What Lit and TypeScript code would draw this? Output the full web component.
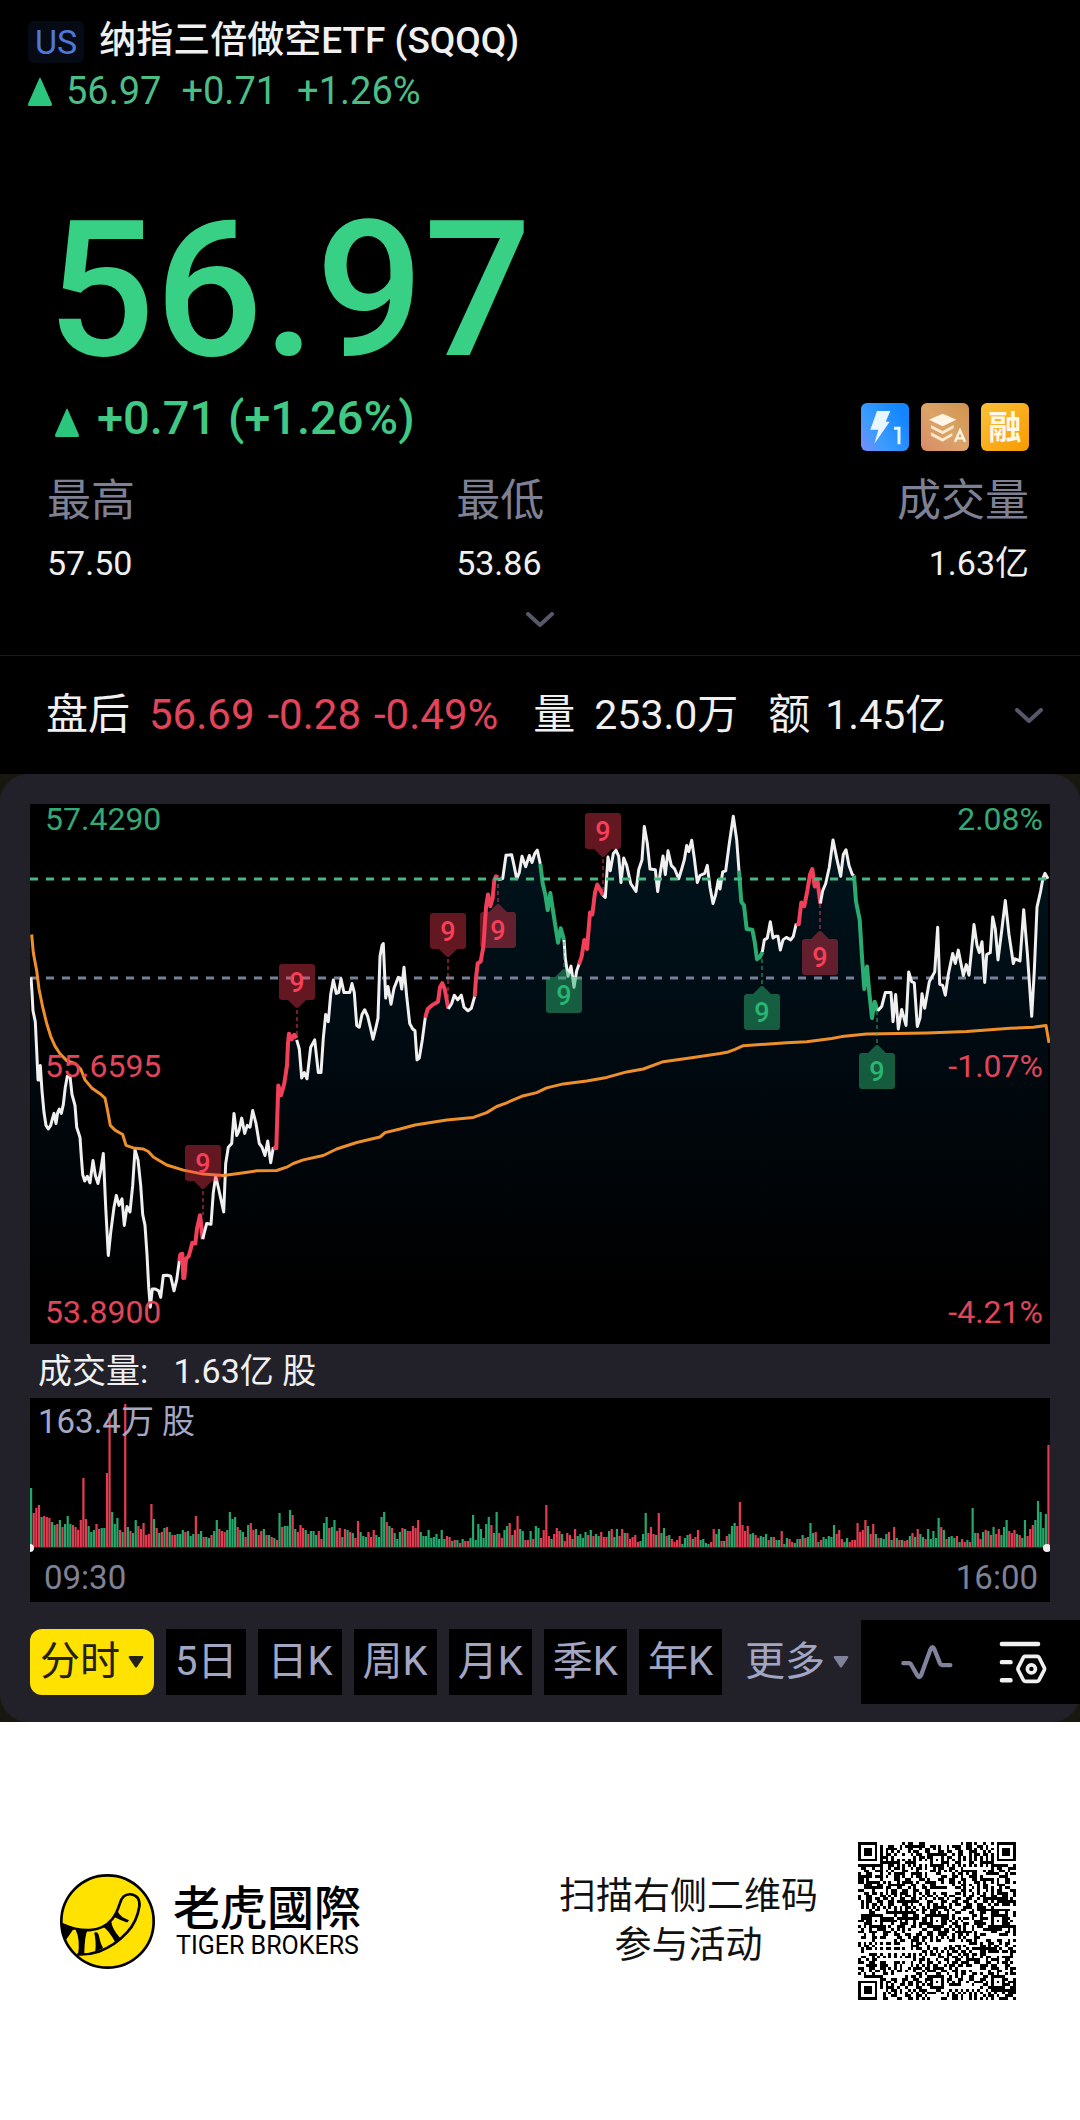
import { LitElement, html, svg, css } from "lit";
import { customElement, property, state } from "lit/decorators.js";
import { classMap } from "lit/directives/class-map.js";

type Tone = "flat" | "up" | "down";
interface Run {
  tone: Tone;
  at: number;
  pts: string;
}
interface Flag {
  x: number;
  top: number;
  tone: "up" | "down";
  tip: "above" | "below";
  leg: number;
}

/* Intraday price runs. Points are on a fine grid: 3 units per chart unit across, 11/4 down. */
const RUNS: Run[] = [
  { tone: "flat", at: -30, pts: "33,518 36,560 39,610 46,640 50,720 54,800 58,800 61,760 66,830 72,890 78,925 85,935 92,925 97,908 102,892 108,920 113,890 118,880 124,892 130,868 136,820 142,790 150,790 156,840 165,870 170,930 180,958 184,1010 188,1060 194,1078 202,1065 210,1083 219,1022 226,1062 234,1085 242,1050 250,1002 257,1150 265,1283 272,1220 282,1150 289,1118 297,1145 306,1127 313,1200 321,1148 330,1163 338,1090 345,992 354,1020 362,1090 368,1170 375,1200 381,1280 386,1370 391,1425 397,1375 406,1375 416,1380 422,1398 430,1338 442,1337 452,1340 462,1380 470,1350 478,1298" },
  { tone: "up", at: -30, pts: "478,1298 481,1280 487,1278 490,1345 493,1345 498,1292 506,1285 512,1265 517,1248 526,1250 531,1210 540,1172 544,1200 548,1238" },
  { tone: "flat", at: -30, pts: "548,1238 553,1220 560,1195 573,1197 580,1110 587,1065 596,1100 611,1163 617,1030 625,985 635,975 642,892 650,953 657,940 665,905 674,947 682,925 690,930 698,884 708,920 718,975 726,985 735,1008 743,968 752,1028 760,985" },
  { tone: "up", at: -30, pts: "760,985 769,988 772,900 775,815 783,842 793,810 801,760 804,700 807,673 815,688 823,676 830,685" },
  { tone: "flat", at: -30, pts: "830,690 838,715 845,795 853,780 861,797 872,710 884,690 890,740 895,780 903,780 910,685 917,620 925,640 932,565 940,525 949,562 956,560 963,522 972,560 989,560 996,535 1003,560 1010,650 1018,655 1026,620 1034,607 1043,625 1052,660 1059,688 1068,655 1074,630 1080,460 1086,430 1090,425 1097,575 1104,543 1113,592 1122,548 1135,518 1140,520 1145,550 1152,490 1160,570 1169,645 1178,660 1185,665 1191,745 1198,740 1207,690 1216,628" },
  { tone: "up", at: 990, pts: "196,628 203,605 215,595 234,585 240,545 247,534 254,550 265,603" },
  { tone: "flat", at: 990, pts: "265,605 275,590 283,567 293,580 304,567 312,600 324,610 334,603 344,570" },
  { tone: "up", at: 990, pts: "344,570 348,520 353,480 362,474 370,435 374,380 378,325 384,290 391,322 398,300 403,250 408,240 414,243" },
  { tone: "flat", at: 990, pts: "414,250 428,246 438,182 455,181 462,210 470,247 478,230 486,185 497,214 508,183 516,202 524,178 532,168 541,206" },
  { tone: "down", at: 990, pts: "541,206 548,260 556,290 563,333 571,286 580,340 594,423 602,383 612,415" },
  { tone: "flat", at: 990, pts: "612,415 616,465 624,515 633,487 642,545 650,500 657,482" },
  { tone: "up", at: 990, pts: "657,482 665,460 673,415 681,440 690,340 697,345 705,285 712,263 722,280 729,292" },
  { tone: "flat", at: 990, pts: "729,292 736,298 744,187 751,225 760,178 768,168 776,185 783,257 791,190 800,210 812,260 828,282 836,222 846,195 853,103 862,150 870,220 886,222 893,282 901,230 909,184 916,235 924,170 934,210 944,220 956,247 965,220 973,195 980,155 986,172 995,141 1003,190 1012,257 1020,238 1034,232 1042,210 1050,270 1059,315 1067,290 1075,250 1080,275 1088,228 1097,225 1108,150 1120,75 1130,140 1137,225" },
  { tone: "down", at: 2070, pts: "57,225 64,310 72,320 80,385 97,387 104,420 111,468 120,462 127,448" },
  { tone: "flat", at: 2070, pts: "127,448 133,415 142,410 151,365 159,410 167,405 174,405 181,443 189,415 199,408 212,415 220,405 229,370" },
  { tone: "up", at: 2070, pts: "229,370 236,372 244,312 253,322 262,280 270,235 277,220 284,268 292,248 301,315" },
  { tone: "flat", at: 2070, pts: "301,315 308,280 317,260 328,215 339,140 350,190 362,240 370,180 378,167 387,210 397,235 402,238" },
  { tone: "down", at: 2070, pts: "402,238 408,310 419,360 425,450 433,550 441,488 448,560 456,630 464,585 473,612" },
  { tone: "flat", at: 2070, pts: "473,610 485,598 496,560 513,560 519,640 527,565 535,660 545,606 558,650 566,503 575,530 583,533 592,653 600,630 606,563 614,603 628,530 644,503 653,380 659,537 668,540 676,567 685,510 698,452 706,480 715,443 730,513 739,483 747,512 754,450 762,373 771,430 778,450 786,420 794,532 800,455 811,450 818,352 826,385 834,470 845,390 856,307 867,400 880,480 885,467 900,473 911,332 922,450 935,625 943,500 951,325 962,280 969,245 975,232 984,247" },
];

const AVERAGE: [number, string][] = [
  [-30, "35,400 40,450 50,500 57,550 68,600 80,645 92,680 105,707 120,728 140,747 165,755 182,770 195,800 215,822 240,838 255,850 262,880 271,925 285,938 308,950 318,980 340,987 370,990 385,997 400,1012 440,1034 490,1048 550,1059 610,1063 650,1058 710,1050 770,1049 800,1040 820,1030 850,1020 910,1008 950,990 1010,972"],
  [990, "60,957 75,945 120,935 165,924 260,910 340,903 380,890 410,873 440,863 485,845 530,835 560,822 610,811 680,803 740,793 800,778 850,770 910,750 1000,738"],
  [2070, "0,727 25,723 45,716 70,706 200,698 260,695 335,686 365,681 440,674 620,671 740,667 870,658 940,655 978,650 987,698"],
];

const FLAGS: Flag[] = [
  { x: 173, top: 341, tone: "up", tip: "below", leg: 411 },
  { x: 267, top: 160, tone: "up", tip: "below", leg: 234 },
  { x: 418, top: 109, tone: "up", tip: "below", leg: 204 },
  { x: 468, top: 108, tone: "up", tip: "above", leg: 76 },
  { x: 534, top: 173, tone: "down", tip: "above", leg: 136 },
  { x: 573, top: 9, tone: "up", tip: "below", leg: 91 },
  { x: 732, top: 190, tone: "down", tip: "above", leg: 148 },
  { x: 790, top: 135, tone: "up", tip: "above", leg: 100 },
  { x: 847, top: 249, tone: "down", tip: "above", leg: 208 },
];

/* Volume per minute: r = red bar, g = green bar, then its height. */
const VOLUME =
  "g59 r34 r39 r42 g30 r31 r30 r29 g25 g22 r23 g27 r20 g23 g31 g23 r22 r20 r17 r27 r69 r28 g21 g15 g17 r23 r18 g19 g19 r74 r134 g35 g23 g29 r17 g15 r143 g20 r16 g14 g27 r21 r18 r24 r12 r13 r43 g28 r19 g14 r15 g19 r20 g15 r12 r12 g13 g13 g17 r15 g16 g11 g13 r31 g13 g16 r10 g10 g9 r12 g16 g27 r18 r16 r15 g17 g35 g28 g30 r20 g17 g15 r10 g22 r24 r17 g18 r12 r16 g18 r12 g12 r10 g9 r7 g34 r20 g21 g21 g37 r32 g18 r15 r22 r19 g17 r13 g16 g16 g12 r16 r8 g24 g30 r19 g20 g27 r16 r19 g10 r18 g17 r15 g14 r9 r26 g15 g11 g10 r15 r10 r17 g12 g10 g30 g35 r25 g21 r19 g14 g8 g15 r19 g18 r16 r16 r21 r19 r27 g15 g11 g11 g17 g9 g10 g13 g8 g17 g8 r11 r10 g6 r7 g7 r4 g8 r6 r6 g9 g32 g7 g23 g18 g9 g23 g30 r22 g14 g35 r14 r9 g17 g21 r24 g12 r17 r31 g18 g16 r7 r7 g16 r8 g21 g19 " +
  "r9 r17 r42 r11 g8 r13 r19 r16 g13 r6 r14 r12 g8 r18 g11 g13 g9 g15 r12 g17 r11 g13 g11 r15 r10 r10 g16 r18 g10 g18 r11 r18 g14 r14 r8 r10 r12 r5 g6 g13 g34 r14 r20 r13 g12 r34 g14 g19 r11 g12 r8 r5 r7 r11 g3 g9 g12 r13 g8 r10 r17 g7 g8 g4 g3 r5 r18 g13 g18 r6 g6 r11 g13 g21 g24 r21 r45 r22 r16 r21 g13 g14 r12 r9 g11 g10 g13 r7 g10 r10 g7 g7 r16 g3 g9 r8 r5 g4 g8 r8 g12 r9 g10 g24 g14 r15 g5 r7 g10 g8 g11 g10 g22 r13 r17 r8 g5 g9 r5 r7 r7 r24 r15 r17 r27 g21 r13 r23 g13 r9 g9 g8 g13 r15 g7 r20 g9 r7 g7 r6 r7 g11 r14 g10 r18 g13 g10 r8 g18 g8 g16 g9 g29 r20 g17 r8 g10 g11 g9 r11 g5 r8 r5 g7 r5 g39 g14 r14 r8 g15 r17 g16 r12 g20 r13 r18 g12 g20 g27 r16 r14 r17 g13 r12 g9 g27 r11 r18 r22 g27 g46 g35 g19 g33 r102";

const toChart = (at: number, pts: string): string[] =>
  pts.split(" ").map((p) => {
    const [x, y] = p.split(",").map(Number);
    return `${((x + at) / 3).toFixed(1)},${(y / 2.75 - 15).toFixed(1)}`;
  });

const priceLine = RUNS.flatMap((r) => toChart(r.at, r.pts));
const averageLine = AVERAGE.flatMap(([at, pts]) => toChart(at, pts));

/* Square code with finder, timing and alignment patterns around a seeded data field. */
const CODE_SIZE = 57;
function codePath(): string {
  const n = CODE_SIZE;
  const cell: (boolean | null)[][] = Array.from({ length: n }, () => Array(n).fill(null));
  const ring = (cx: number, cy: number, reach: number, dark: number[]) => {
    for (let y = -reach; y <= reach; y++)
      for (let x = -reach; x <= reach; x++) {
        const r = cell[cy + y];
        if (r && cx + x >= 0 && cx + x < n) r[cx + x] = dark.includes(Math.max(Math.abs(x), Math.abs(y)));
      }
  };
  for (let i = 0; i < n; i++) {
    cell[6][i] = i % 2 === 0;
    cell[i][6] = i % 2 === 0;
  }
  for (const x of [6, 28, 50]) for (const y of [6, 28, 50]) ring(x, y, 2, [0, 2]);
  ring(3, 3, 4, [0, 1, 3]);
  ring(n - 4, 3, 4, [0, 1, 3]);
  ring(3, n - 4, 4, [0, 1, 3]);
  let seed = 5697;
  let d = "";
  for (let y = 0; y < n; y++)
    for (let x = 0; x < n; x++) {
      seed = (seed * 1103515245 + 12345) % 2147483648;
      const dark = cell[y][x] ?? (seed >> 12) % 2 === 0;
      if (dark) d += `M${x} ${y}h1v1h-1z`;
    }
  return d;
}

@customElement("price-chart")
export class PriceChart extends LitElement {
  static styles = css`
    :host { display: grid; background: #000; }
    .plot, .scale { grid-area: 1 / 1; }
    .plot { display: block; width: 100%; height: auto; }
    .scale {
      display: flex; flex-direction: column; justify-content: space-between;
      padding: 0 7px 17px 15px; font-size: 32px; line-height: 30px;
    }
    .pair { display: flex; justify-content: space-between; margin: 0; }
    .scale .up { color: #35a873; }
    .scale .down { color: #e0455a; }
    .flat-line, .up-line, .down-line, .avg { fill: none; stroke-linejoin: round; }
    .flat-line { stroke: #f0f0f0; stroke-width: 3; }
    .up-line { stroke: #f2405a; stroke-width: 4; }
    .down-line { stroke: #2aab70; stroke-width: 4; }
    .avg { stroke: #ee8f2a; stroke-width: 3; }
    .last, .open { stroke-width: 3; stroke-dasharray: 8 8; }
    .last { stroke: #45b880; }
    .open { stroke: #77809a; }
    .leg { stroke-width: 1; stroke-dasharray: 4 3; }
    .leg.up { stroke: #e0405a; }
    .leg.down { stroke: #2aab70; }
    .flag.up { fill: #f73a52; fill-opacity: 0.4; }
    .flag.down { fill: #2ab070; fill-opacity: 0.5; }
    .nine { font-size: 27px; font-weight: 500; text-anchor: middle; }
    .nine.up { fill: #f73f58; }
    .nine.down { fill: #2ab573; }
  `;

  private flag(f: Flag) {
    const b = f.top + 36;
    const tip =
      f.tip === "below"
        ? `M${f.x - 9} ${b}h18l-7 7q-2 2 -4 0z`
        : `M${f.x - 9} ${f.top}l7 -7q2 -2 4 0l7 7z`;
    const box = `M${f.x - 15} ${f.top}h30q3 0 3 3v30q0 3 -3 3h-30q-3 0 -3 -3v-30q0 -3 3 -3z`;
    return svg`
      <line class="leg ${f.tone}" x1=${f.x} x2=${f.x} y1=${f.tip === "below" ? b + 10 : f.top - 10} y2=${f.leg}></line>
      <path class="flag ${f.tone}" d="${box}${tip}"></path>
      <text class="nine ${f.tone}" x=${f.x} y=${f.top + 28}>9</text>`;
  }

  render() {
    return html`
      <svg class="plot" viewBox="0 0 1020 540" role="img" aria-label="分时走势">
        <defs>
          <linearGradient id="fade" x1="0" y1="0" x2="0" y2="540" gradientUnits="userSpaceOnUse">
            <stop offset="0" stop-color="#00151e"></stop>
            <stop offset="0.5" stop-color="#00090f"></stop>
            <stop offset="0.9" stop-color="#000"></stop>
          </linearGradient>
        </defs>
        <polygon fill="url(#fade)" points="1,540 ${priceLine.join(" ")} 1018,540"></polygon>
        <line class="open" x1="0" x2="1020" y1="174" y2="174"></line>
        ${RUNS.map((r) => svg`<polyline class="${r.tone}-line" points=${toChart(r.at, r.pts).join(" ")}></polyline>`)}
        <line class="last" x1="0" x2="1020" y1="75" y2="75"></line>
        <polyline class="avg" points=${averageLine.join(" ")}></polyline>
        ${FLAGS.map((f) => this.flag(f))}
      </svg>
      <div class="scale">
        <p class="pair up"><span>57.4290</span><span>2.08%</span></p>
        <p class="pair down"><span>55.6595</span><span>-1.07%</span></p>
        <p class="pair down"><span>53.8900</span><span>-4.21%</span></p>
      </div>
    `;
  }
}

@customElement("volume-chart")
export class VolumeChart extends LitElement {
  static styles = css`
    :host { display: grid; background: #000; }
    .bars, .peak { grid-area: 1 / 1; }
    .bars { display: block; width: 100%; height: auto; }
    .peak { margin: 0; padding: 4px 8px; font-size: 33px; line-height: 40px; color: #a5a8c4; }
    .r { fill: #e63b51; }
    .g { fill: #25a86c; }
    .axis { fill: #26262c; }
    .end { fill: #f0f0f0; }
    .times {
      display: flex; justify-content: space-between;
      padding: 6px 12px 4px 14px; font-size: 33px; line-height: 40px; color: #7f8194;
    }
  `;

  render() {
    const bars = VOLUME.split(" ");
    const step = 1020 / bars.length;
    return html`
      <svg class="bars" viewBox="0 0 1020 154" role="img" aria-label="成交量">
        ${bars.map((b, i) => {
          const h = Number(b.slice(1));
          return svg`<rect class=${b[0]} x=${(i * step).toFixed(2)} y=${149 - h} width="2.2" height=${h}></rect>`;
        })}
        <rect class="axis" x="0" y="149" width="1020" height="1"></rect>
        <circle class="end" cx="0" cy="150" r="4"></circle>
        <circle class="end" cx="1017" cy="150" r="4"></circle>
      </svg>
      <p class="peak">163.4万 股</p>
      <div class="times"><span>09:30</span><span>16:00</span></div>
    `;
  }
}

@customElement("period-bar")
export class PeriodBar extends LitElement {
  static styles = css`
    :host { display: flex; align-items: center; justify-content: space-between; }
    .tabs { display: flex; gap: 12px; padding-left: 30px; }
    button { border: 0; margin: 0; font: inherit; color: inherit; background: none; cursor: pointer; }
    .tab {
      display: flex; align-items: center; gap: 8px; height: 66px; padding: 0 9px;
      background: #000; color: #a3a6c2; font-size: 40px; line-height: 66px; white-space: nowrap;
    }
    .tab.plain { background: none; padding: 0 11px; }
    .tab.on { background: #ffe200; color: #22211a; border-radius: 12px; padding: 0 10px; }
    .tri { width: 16px; height: 12px; fill: currentColor; }
    .plain .tri { color: #7f8299; }
    .tools { display: flex; align-items: center; gap: 46px; height: 84px; padding: 0 33px 0 40px; background: #000; }
    .tool { display: flex; padding: 0; }
    .pulse { width: 52px; height: 36px; fill: none; stroke: #80839b; stroke-width: 13; stroke-linecap: round; stroke-linejoin: round; }
    .setup { width: 48px; height: 43px; fill: none; stroke: #f0f0f0; stroke-width: 13; stroke-linecap: round; stroke-linejoin: round; }
    .thin { stroke-width: 11; }
  `;

  @state() private active = "分时";

  render() {
    const tri = html`<svg class="tri" viewBox="0 0 16 12" aria-hidden="true"><path d="M2 0h12q2 0 1 2l-6 9q-1 1 -2 0l-6 -9q-1 -2 1 -2z"></path></svg>`;
    return html`
      <nav class="tabs">
        ${["分时", "5日", "日K", "周K", "月K", "季K", "年K", "更多"].map(
          (t) => html`<button
            class=${classMap({ tab: true, on: t === this.active, plain: t === "更多" })}
            @click=${() => (this.active = t)}
          >${t}${t === "分时" || t === "更多" ? tri : ""}</button>`
        )}
      </nav>
      <div class="tools">
        <button class="tool" aria-label="指标">
          <svg class="pulse" viewBox="512 94 158 109"><path d="M519 152H536Q541 152 543 157L562 190Q568 199 573 189L602 109Q608 98 613 109L630 152Q633 158 638 158H662"></path></svg>
        </button>
        <button class="tool" aria-label="设置">
          <svg class="setup" viewBox="808 84 142 128">
            <path d="M816 93H924M816 147H842M816 201H842"></path>
            <path class="thin" d="M884 130H921Q925 130 927 133L942 163Q944 167 942 171L927 200Q925 204 921 204H886Q882 204 880 200L865 171Q863 167 865 163L880 133Q882 130 884 130Z"></path>
            <circle class="thin" cx="904" cy="167" r="12"></circle>
          </svg>
        </button>
      </div>
    `;
  }
}

@customElement("brand-footer")
export class BrandFooter extends LitElement {
  static styles = css`
    :host {
      display: flex; align-items: center; justify-content: space-between; gap: 24px;
      padding: 24px 64px 24px 60px; background: #fff; color: #111;
    }
    .brand, .invite { display: flex; align-items: center; }
    .brand { gap: 18px; }
    .invite { gap: 40px; }
    .mark { width: 95px; height: 95px; }
    .names { display: flex; flex-direction: column; }
    .zh { font-family: "Noto Sans CJK TC", sans-serif; font-size: 47px; font-weight: 500; line-height: 50px; color: #000; }
    .en { padding-left: 3px; font-size: 25px; line-height: 32px; color: #000; }
    .hint { margin: 0; font-size: 37px; line-height: 49px; text-align: center; }
    .code { width: 158px; height: 158px; }
  `;

  render() {
    return html`
      <div class="brand">
        <svg class="mark" viewBox="60 101 286 286" aria-hidden="true">
          <circle cx="203" cy="244" r="139" fill="#ffe200" stroke="#000" stroke-width="8"></circle>
          <path d="M66 252Q110 272 150 270Q192 267 216 238Q230 222 240 190Q248 161 272 162Q302 166 299 198Q292 244 262 277Q224 318 178 334Q146 345 112 343" fill="none" stroke="#000" stroke-width="8"></path>
          <path d="M62 248L108 264L98 270Q86 288 76 302L66 284Z"></path>
          <path d="M106 266L144 268Q134 284 133 342L114 344Q122 300 106 266Z"></path>
          <path d="M163 278Q174 272 178 290Q182 312 190 324L166 336Q170 306 163 278Z"></path>
          <path d="M190 260L214 242Q216 266 241 294L226 306Q206 270 190 260Z"></path>
          <path d="M222 230L234 214Q242 232 268 240L262 247Q240 240 222 230Z"></path>
        </svg>
        <div class="names"><span class="zh">老虎國際</span><span class="en">TIGER BROKERS</span></div>
      </div>
      <div class="invite">
        <p class="hint">扫描右侧二维码<br />参与活动</p>
        <svg class="code" viewBox="0 0 57 57" shape-rendering="crispEdges" role="img" aria-label="二维码"><path d=${codePath()}></path></svg>
      </div>
    `;
  }
}

@customElement("app-root")
export class AppRoot extends LitElement {
  static styles = css`
    :host {
      display: flex; flex-direction: column; min-height: 100vh; background: #000; color: #f0f0f0;
      font-family: Roboto, "Noto Sans CJK SC", sans-serif;
    }
    button { border: 0; margin: 0; padding: 0; font: inherit; color: inherit; background: none; cursor: pointer; }
    .top { padding: 21px 28px 0; }
    .title { display: flex; align-items: flex-start; gap: 15px; }
    .market {
      padding: 0 7px; border-radius: 6px; background: #060a14; color: #4f78d8;
      font-size: 34px; line-height: 42px;
    }
    .name { margin: 0; font-size: 37px; font-weight: 500; line-height: 40px; }
    .mini { display: flex; gap: 20px; align-items: center; font-size: 38px; line-height: 56px; color: #4dbd86; }
    .mini .now { display: flex; align-items: center; gap: 14px; }
    .rise { width: 24px; height: 29px; fill: #2ac67c; }
    .quote { display: flex; flex-direction: column; padding: 71px 51px 0 47px; }
    .price { margin: 0; font-size: 190px; font-weight: 500; line-height: 200px; color: #37d085; }
    .move { display: flex; align-items: flex-start; justify-content: space-between; padding-left: 8px; }
    .delta { display: flex; align-items: center; gap: 18px; font-size: 47px; font-weight: 500; line-height: 56px; color: #3fc985; }
    .delta .rise { margin-top: 8px; }
    .badges { display: flex; gap: 12px; margin-top: 13px; }
    .badge { width: 48px; height: 48px; display: block; }
    .char { font-size: 33px; font-weight: 700; text-anchor: middle; fill: #fff8e8; }
    .stats { display: grid; grid-template-columns: 5fr 4fr 3fr; margin: 18px 0 0; }
    .stat:last-child { text-align: right; }
    .stat dt { font-size: 44px; line-height: 64px; color: #7e8094; }
    .stat dd { margin: 0; font-size: 34px; line-height: 60px; }
    .chev { width: 28px; height: 15px; fill: none; stroke: #56586a; stroke-width: 4; stroke-linecap: round; stroke-linejoin: round; }
    .more { align-self: center; display: flex; padding: 19px 20px 28px 24px; }
    .after {
      display: flex; align-items: center; height: 118px; padding: 0 37px 0 46px;
      border-top: 1px solid #1b1b1d; font-size: 42px; line-height: 56px; white-space: nowrap;
    }
    .after .loss { display: flex; gap: 13px; margin: 0 35px 0 19px; color: #e2445a; }
    .after .num { margin: 0 30px 0 19px; font-size: 41px; }
    .after .num.tail { margin: 0 auto 0 15px; }
    .expand { display: flex; }
    .backdrop { background: #191810; }
    .panel { padding: 30px 0 18px; border-radius: 28px; background: #22212a; }
    .charts { padding: 0 30px; }
    .caption { margin: 0; padding-left: 8px; font-size: 34px; line-height: 54px; white-space: pre; }
    .periods { margin-top: 18px; }
    .footer { flex: 1; }
  `;

  @property() symbol = "SQQQ";

  render() {
    const rise = html`<svg class="rise" viewBox="0 0 24 29" aria-hidden="true"><path d="M11 2Q12 -1 13 2L24 27Q24 29 23 29H1Q0 29 0 27Z"></path></svg>`;
    const chevron = html`<svg class="chev" viewBox="0 0 28 15" aria-hidden="true"><path d="M2 2L14 13L26 2"></path></svg>`;
    return html`
      <header class="top">
        <div class="title">
          <span class="market">US</span>
          <h1 class="name">纳指三倍做空ETF (${this.symbol})</h1>
        </div>
        <div class="mini"><span class="now">${rise}56.97</span><span>+0.71</span><span>+1.26%</span></div>
      </header>
      <section class="quote">
        <p class="price">56.97</p>
        <div class="move">
          <div class="delta">${rise}<span>+0.71 (+1.26%)</span></div>
          <div class="badges">
            <svg class="badge" viewBox="0 0 144 144" aria-hidden="true">
              <defs><linearGradient id="b1" x1="0" y1="1" x2="1" y2="0.4"><stop offset="0" stop-color="#7a8cff"></stop><stop offset="0.4" stop-color="#3a9cff"></stop><stop offset="1" stop-color="#1285ff"></stop></linearGradient></defs>
              <rect width="144" height="144" rx="18" fill="url(#b1)"></rect>
              <path d="M48 24H88L74 56H86L40 122L52 80H28Z" fill="#eaf6ff"></path>
              <path d="M99 76H114V124" fill="none" stroke="#eaf6ff" stroke-width="9"></path>
            </svg>
            <svg class="badge" viewBox="0 0 144 144" aria-hidden="true">
              <defs><linearGradient id="b2" x1="0" y1="1" x2="1" y2="0"><stop offset="0" stop-color="#d98a68"></stop><stop offset="0.5" stop-color="#dba468"></stop><stop offset="1" stop-color="#cf924c"></stop></linearGradient></defs>
              <rect width="144" height="144" rx="18" fill="url(#b2)"></rect>
              <path d="M65 32L106 50L65 70L24 50Z" fill="#fff6e6"></path>
              <path d="M30 66L65 84L98 66V76L65 94L30 76ZM30 88L65 106L94 90V98L65 116L30 98Z" fill="#ffe9cc"></path>
              <path d="M102 116L117 82L132 116M107 106H127" fill="none" stroke="#fff6e6" stroke-width="7"></path>
            </svg>
            <svg class="badge" viewBox="0 0 48 48" role="img" aria-label="融">
              <defs><linearGradient id="b3" x1="0" y1="0" x2="1" y2="1"><stop offset="0" stop-color="#fcc23a"></stop><stop offset="1" stop-color="#f79a00"></stop></linearGradient></defs>
              <rect width="48" height="48" rx="6" fill="url(#b3)"></rect>
              <text class="char" x="24" y="36">融</text>
            </svg>
          </div>
        </div>
        <dl class="stats">
          <div class="stat"><dt>最高</dt><dd>57.50</dd></div>
          <div class="stat"><dt>最低</dt><dd>53.86</dd></div>
          <div class="stat"><dt>成交量</dt><dd>1.63亿</dd></div>
        </dl>
        <button class="more" aria-label="展开">${chevron}</button>
      </section>
      <section class="after">
        <span>盘后</span>
        <span class="loss"><span>56.69</span><span>-0.28</span><span>-0.49%</span></span>
        <span>量</span><span class="num">253.0万</span>
        <span>额</span><span class="num tail">1.45亿</span>
        <button class="expand" aria-label="展开盘后">${chevron}</button>
      </section>
      <div class="backdrop">
        <main class="panel">
          <div class="charts">
            <price-chart></price-chart>
            <p class="caption">成交量:   1.63亿 股</p>
            <volume-chart></volume-chart>
          </div>
          <period-bar class="periods"></period-bar>
        </main>
      </div>
      <brand-footer class="footer"></brand-footer>
    `;
  }
}
